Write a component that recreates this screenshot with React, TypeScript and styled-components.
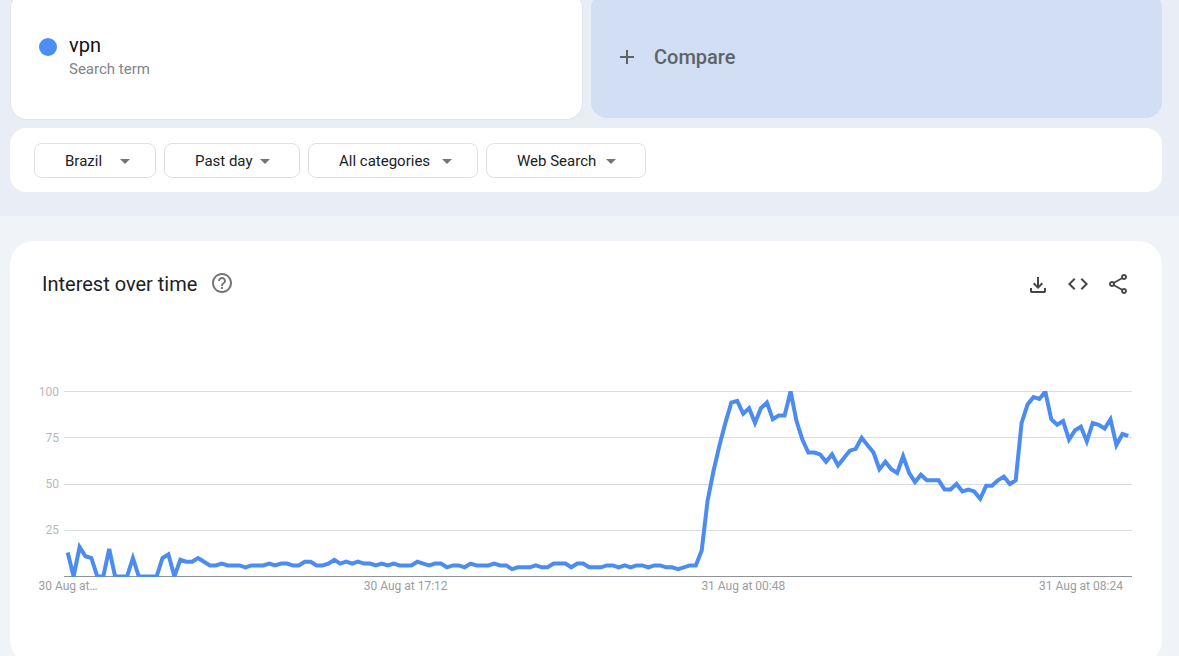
import React from "react";
import styled, { createGlobalStyle } from "styled-components";
import { MdAdd, MdCode, MdHelpOutline, MdOutlineShare } from "react-icons/md";

const GlobalStyle = createGlobalStyle`
  *, *::before, *::after { box-sizing: border-box; }
  body {
    margin: 0;
    background: #f0f3f8;
    color: #202124;
    font-family: "Google Sans", Roboto, "Liberation Sans", sans-serif;
  }
  button, select { font-family: inherit; color: inherit; margin: 0; }
`;

const Page = styled.div`
  display: flex;
  flex-direction: column;
  height: 100vh;
  overflow: hidden;
`;

const Explore = styled.header`
  flex: none;
  padding: 0 17px 24px 10px;
  background: #e8edf6;
`;

const Terms = styled.div`
  display: grid;
  grid-template-columns: 1fr 1fr;
  align-items: start;
  gap: 9px;
  margin: -8px 0 9px 1px;
`;

const TermCard = styled.div`
  display: flex;
  align-items: flex-start;
  gap: 12px;
  height: 127px;
  padding: 41px 28px 0;
  border-radius: 16px;
  background: #fff;
  box-shadow: 0 0 0 1px #e0e4eb;
`;

const Dot = styled.span`
  width: 18px;
  height: 18px;
  margin-top: 5px;
  border-radius: 50%;
  background: #4c8df6;
`;

const TermName = styled.div`
  font-size: 20px;
  line-height: 24px;
  color: #111;
`;

const TermKind = styled.div`
  font-size: 15px;
  line-height: 24px;
  color: #80868b;
`;

const CompareButton = styled.button`
  display: flex;
  align-items: center;
  gap: 15px;
  height: 126px;
  padding: 4px 24px 0;
  border: 0;
  border-radius: 16px;
  background: #d2def4;
  color: #5f6368;
  font-size: 20px;
  font-weight: 500;
  line-height: 24px;
  text-align: left;
`;

const Filters = styled.form`
  display: flex;
  flex-wrap: wrap;
  gap: 8px;
  padding: 15px 24px 14px;
  border-radius: 16px;
  background: #fff;
`;

const Filter = styled.label<{ $width: number }>`
  position: relative;
  width: ${(p) => p.$width}px;
`;

const FilterSelect = styled.select`
  appearance: none;
  display: block;
  width: 100%;
  height: 35px;
  padding: 0 30px;
  border: 1px solid #dfe1e5;
  border-radius: 8px;
  background: #fff;
  font-size: 15px;
  line-height: 20px;
`;

const Caret = styled.span<{ $right: number }>`
  position: absolute;
  top: 16px;
  right: ${(p) => p.$right}px;
  border: 5px solid transparent;
  border-top-color: #757575;
  border-bottom: 0;
  pointer-events: none;
`;

const Card = styled.section`
  flex: none;
  margin: 25px 17px 24px 10px;
  padding-bottom: 71px;
  border-radius: 24px;
  background: #fff;
`;

const CardHeader = styled.div`
  display: flex;
  align-items: center;
  gap: 16px;
  padding: 30px 32px 0;
`;

const CardTitle = styled.h2`
  margin: 0;
  font-size: 20px;
  font-weight: 400;
  line-height: 26px;
`;

const TitleGroup = styled.div`
  display: flex;
  align-items: flex-start;
  gap: 13px;
  margin-right: auto;
`;

const IconButton = styled.button<{ $color?: string }>`
  display: flex;
  padding: 0;
  border: 0;
  background: none;
  color: ${(p) => p.$color ?? "#444746"};
`;

const Plot = styled.div`
  display: grid;
  grid-template-columns: 21px minmax(0, 1fr);
  column-gap: 5px;
  margin-top: 94px;
  padding: 0 30px 0 28px;
`;

const ValueAxis = styled.div`
  display: flex;
  flex-direction: column;
  justify-content: space-between;
  height: 152px;
  margin-top: -6px;
  color: #b5b8bb;
  font-family: Roboto, sans-serif;
  font-size: 12px;
  line-height: 14px;
  text-align: right;
`;

const Graph = styled.svg`
  display: block;
  width: 100%;
  height: 186px;
`;

const TimeAxis = styled.div`
  display: flex;
  justify-content: space-between;
  padding: 2px 38px 0 15px;
  color: #9a9da1;
  font-family: Roboto, sans-serif;
  font-size: 12px;
  line-height: 14px;
`;

const Tick = styled.span`
  width: 86px;
  text-align: center;
  white-space: nowrap;
`;

const values = [
  13, 0, 16, 11, 10, 0, 0, 15, 0, 0, 0, 10, 0, 0, 0, 0, 10, 12, 0, 9,
  8, 8, 10, 8, 6, 6, 7, 6, 6, 6, 5, 6, 6, 6, 7, 6, 7, 7, 6, 6,
  8, 8, 6, 6, 7, 9, 7, 8, 7, 8, 7, 7, 6, 7, 6, 7, 6, 6, 6, 8,
  7, 6, 7, 7, 5, 6, 6, 5, 7, 6, 6, 6, 7, 6, 6, 4, 5, 5, 5, 6,
  5, 5, 7, 7, 7, 5, 7, 7, 5, 5, 5, 6, 6, 5, 6, 5, 6, 6, 5, 6,
  6, 5, 5, 4, 5, 6, 6, 14, 41, 57, 71, 83, 94, 95, 88, 91, 83, 91, 94, 85,
  87, 87, 100, 84, 74, 67, 67, 66, 62, 66, 60, 64, 68, 69, 75, 71, 67, 58, 62, 58,
  56, 65, 56, 51, 55, 52, 52, 52, 47, 47, 50, 46, 47, 46, 42, 49, 49, 52, 54, 50,
  52, 83, 93, 97, 96, 100, 85, 82, 84, 74, 79, 81, 73, 83, 82, 80, 85, 71, 77, 76,
];

const SPAN = 1068;
const INSET = 3.7;
const step = (SPAN - 2 * INSET) / (values.length - 1);
const points = values
  .map((v, i) => `${(INSET + i * step).toFixed(1)},${(185.5 - v * 1.85).toFixed(1)}`)
  .join(" ");

const filters = [
  { name: "Region", value: "Brazil", width: 122, right: 26 },
  { name: "Time", value: "Past day", width: 136, right: 30 },
  { name: "Category", value: "All categories", width: 170, right: 26 },
  { name: "Search type", value: "Web Search", width: 160, right: 30 },
];

const DownloadIcon = () => (
  <svg width="24" height="24" viewBox="0 -1000 960 960" fill="currentColor" aria-hidden="true">
    <path d="M480-320 280-520l56-58 104 104v-326h80v326l104-104 56 58-200 200ZM240-160q-33 0-56.500-23.500T160-240v-120h80v120h480v-120h80v120q0 33-23.500 56.500T720-160H240Z" />
  </svg>
);

export default function App() {
  return (
    <Page>
      <GlobalStyle />
      <Explore>
        <Terms>
          <TermCard>
            <Dot />
            <div>
              <TermName>vpn</TermName>
              <TermKind>Search term</TermKind>
            </div>
          </TermCard>
          <CompareButton type="button">
            <MdAdd size={24} />
            Compare
          </CompareButton>
        </Terms>
        <Filters>
          {filters.map((f) => (
            <Filter key={f.name} $width={f.width}>
              <FilterSelect aria-label={f.name} defaultValue={f.value}>
                <option>{f.value}</option>
              </FilterSelect>
              <Caret $right={f.right} />
            </Filter>
          ))}
        </Filters>
      </Explore>
      <Card>
        <CardHeader>
          <TitleGroup>
            <CardTitle>Interest over time</CardTitle>
            <IconButton type="button" aria-label="Help" $color="#757575">
              <MdHelpOutline size={24} />
            </IconButton>
          </TitleGroup>
          <IconButton type="button" aria-label="Download">
            <DownloadIcon />
          </IconButton>
          <IconButton type="button" aria-label="Embed">
            <MdCode size={24} />
          </IconButton>
          <IconButton type="button" aria-label="Share">
            <MdOutlineShare size={24} />
          </IconButton>
        </CardHeader>
        <Plot>
          <ValueAxis>
            {[100, 75, 50, 25].map((v) => (
              <span key={v}>{v}</span>
            ))}
          </ValueAxis>
          <Graph viewBox={`0 0 ${SPAN} 186`} preserveAspectRatio="none" role="img" aria-label="Interest over time for vpn">
            {[0, 46, 93, 139].map((y) => (
              <rect key={y} x="0" y={y} width={SPAN} height="1" fill="#dadce0" />
            ))}
            <rect x="0" y="185" width={SPAN} height="1" fill="#8f9296" />
            <polyline
              points={points}
              fill="none"
              stroke="#4c8bf0"
              strokeWidth="4"
              vectorEffect="non-scaling-stroke"
            />
          </Graph>
        </Plot>
        <TimeAxis>
          <Tick>30 Aug at…</Tick>
          <Tick>30 Aug at 17:12</Tick>
          <Tick>31 Aug at 00:48</Tick>
          <Tick>31 Aug at 08:24</Tick>
        </TimeAxis>
      </Card>
    </Page>
  );
}
